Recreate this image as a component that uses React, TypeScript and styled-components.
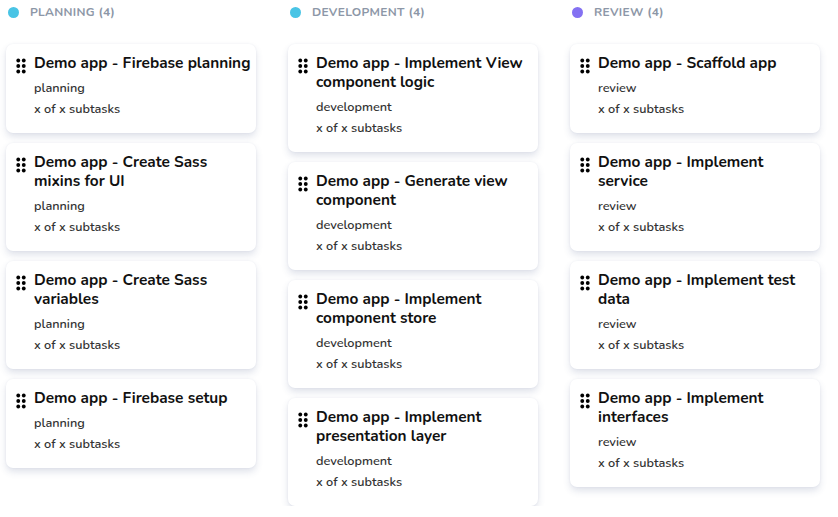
import React from "react";
import styled, { createGlobalStyle } from "styled-components";

const Global = createGlobalStyle`
  html, body { margin: 0; padding: 0; background: #ffffff; }
  body { font-family: "Nunito", Lato, "Noto Sans", sans-serif; }
`;

const Board = styled.div`
  display: grid;
  grid-template-columns: repeat(3, 250px);
  column-gap: 32px;
  padding: 0 6px;
`;

const Column = styled.section`
  display: flex;
  flex-direction: column;
`;

const Header = styled.div`
  display: flex;
  align-items: center;
  gap: 11px;
  height: 24px;
  padding: 0 0 0 2px;
  margin-bottom: 20px;
`;

const Dot = styled.span<{ $color: string }>`
  width: 11px;
  height: 11px;
  border-radius: 50%;
  background: ${(p) => p.$color};
  flex: none;
`;

const HeaderText = styled.h2`
  margin: 0;
  font-size: 12px;
  font-weight: 700;
  letter-spacing: 0.3px;
  color: #8d97a7;
  text-transform: uppercase;
`;

const Cards = styled.div`
  display: flex;
  flex-direction: column;
  gap: 10px;
`;

const Card = styled.article`
  display: flex;
  align-items: flex-start;
  gap: 2px;
  padding: 9px 5px 14px 4px;
  background: #fff;
  border-radius: 7px;
  box-shadow: 0 4px 7px rgba(60, 80, 130, 0.16), 0 0 2px rgba(60, 80, 130, 0.08);
`;

const Handle = styled.svg`
  width: 22px;
  height: 22px;
  flex: none;
  margin-top: 1.5px;
`;

const Body = styled.div`
  display: flex;
  flex-direction: column;
  min-width: 0;
`;

const Title = styled.h3`
  margin: 0;
  font-size: 15.4px;
  line-height: 19px;
  font-weight: 700;
  color: #111;
`;

const Meta = styled.div`
  display: flex;
  flex-direction: column;
  margin-top: 5px;
`;

const MetaLine = styled.span`
  font-size: 12.7px;
  line-height: 21px;
  font-weight: 600;
  color: #333;
`;

const DragIcon = () => (
  <Handle viewBox="0 0 24 24">
    {[6, 12, 18].map((y) =>
      [9, 15].map((x) => <circle key={`${x}-${y}`} cx={x} cy={y} r={2.1} fill="#000" />)
    )}
  </Handle>
);

type ColumnData = { name: string; color: string; status: string; tasks: string[] };

const columns: ColumnData[] = [
  {
    name: "Planning",
    color: "#49c4e5",
    status: "planning",
    tasks: [
      "Demo app - Firebase planning",
      "Demo app - Create Sass mixins for UI",
      "Demo app - Create Sass variables",
      "Demo app - Firebase setup",
    ],
  },
  {
    name: "Development",
    color: "#49c4e5",
    status: "development",
    tasks: [
      "Demo app - Implement View component logic",
      "Demo app - Generate view component",
      "Demo app - Implement component store",
      "Demo app - Implement presentation layer",
    ],
  },
  {
    name: "Review",
    color: "#8471f2",
    status: "review",
    tasks: [
      "Demo app - Scaffold app",
      "Demo app - Implement service",
      "Demo app - Implement test data",
      "Demo app - Implement interfaces",
    ],
  },
];

export default function App() {
  return (
    <>
      <Global />
      <Board>
        {columns.map((c) => (
          <Column key={c.name}>
            <Header>
              <Dot $color={c.color} />
              <HeaderText>
                {c.name} ({c.tasks.length})
              </HeaderText>
            </Header>
            <Cards>
              {c.tasks.map((t) => (
                <Card key={t}>
                  <DragIcon />
                  <Body>
                    <Title>{t}</Title>
                    <Meta>
                      <MetaLine>{c.status}</MetaLine>
                      <MetaLine>x of x subtasks</MetaLine>
                    </Meta>
                  </Body>
                </Card>
              ))}
            </Cards>
          </Column>
        ))}
      </Board>
    </>
  );
}
